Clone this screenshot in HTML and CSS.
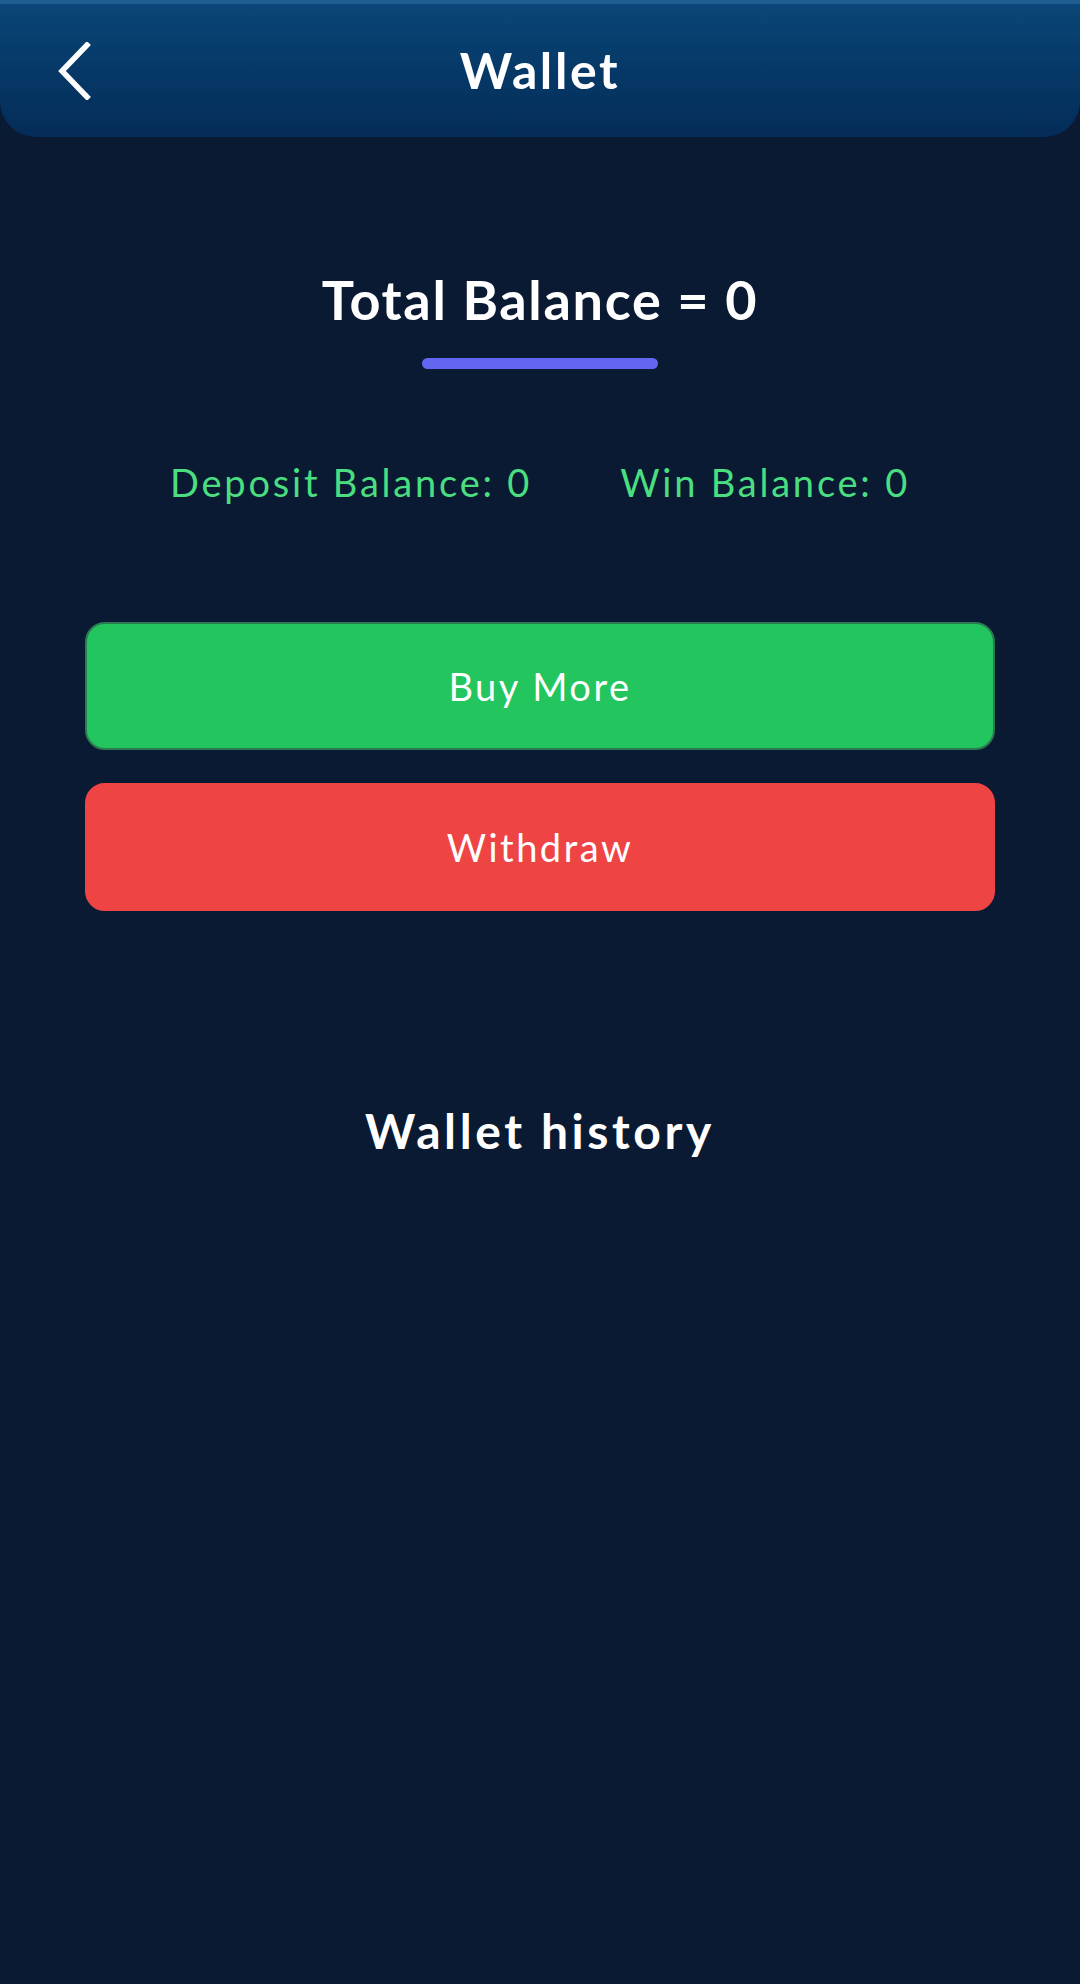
FILE: index.html
```html
<!DOCTYPE html>
<html lang="en">
<head>
<meta charset="utf-8">
<title>Wallet</title>
<link rel="stylesheet" href="styles.css">
</head>
<body>
<header class="topbar">
  <div class="topbar-left">
    <svg class="back" width="34" height="58" viewBox="0 0 34 58" aria-hidden="true">
      <path d="M30 3 L5 29 L30 55" fill="none" stroke="#ffffff" stroke-width="5.5" stroke-linecap="square" stroke-linejoin="miter"/>
    </svg>
  </div>
  <h1 class="topbar-title">Wallet</h1>
  <div class="topbar-right"></div>
</header>
<main class="content">
  <section class="total">
    <h2 class="total-title">Total Balance = 0</h2>
    <div class="total-bar"></div>
  </section>
  <div class="balances">
    <span class="balance">Deposit Balance: 0</span>
    <span class="balance">Win Balance: 0</span>
  </div>
  <div class="actions">
    <button class="btn btn-green">Buy More</button>
    <button class="btn btn-red">Withdraw</button>
  </div>
  <h2 class="history-title">Wallet history</h2>
</main>
</body>
</html>
```
FILE: styles.css
```css
* { box-sizing: border-box; }
html, body {
  margin: 0;
  padding: 0;
}
body {
  width: 1080px;
  min-height: 1984px;
  background: #0a1a33;
  font-family: "Lato", "Noto Sans", sans-serif;
  color: #ffffff;
}
.topbar {
  height: 137px;
  display: grid;
  grid-template-columns: 1fr auto 1fr;
  align-items: center;
  background: linear-gradient(180deg, #0a4677 0%, #063a69 45%, #042c58 100%);
  border-top: 4px solid #1d5d8f;
  border-radius: 0 0 36px 36px;
}
.topbar-left {
  display: flex;
  align-items: center;
  padding-left: 57px;
}
.back { display: block; }
.topbar-title {
  margin: 0 0 2px;
  font-size: 50px;
  font-weight: 700;
  line-height: 1;
  letter-spacing: 2.6px;
}
.content {
  display: flex;
  flex-direction: column;
  align-items: center;
}
.total {
  display: flex;
  flex-direction: column;
  align-items: center;
  margin-top: 133px;
}
.total-title {
  margin: 0;
  font-size: 54px;
  font-weight: 700;
  line-height: 60px;
  letter-spacing: 1.7px;
}
.total-bar {
  width: 236px;
  height: 11px;
  border-radius: 6px;
  background: #6366f1;
  margin-top: 28px;
}
.balances {
  display: flex;
  justify-content: center;
  gap: 88px;
  margin-top: 90px;
}
.balance {
  color: #4ade80;
  font-size: 38px;
  font-weight: 400;
  line-height: 46px;
  letter-spacing: 2.8px;
}
.actions {
  width: 910px;
  display: flex;
  flex-direction: column;
  gap: 33px;
  margin-top: 117px;
}
.btn {
  height: 128px;
  border-radius: 20px;
  font-family: inherit;
  font-size: 38px;
  letter-spacing: 2.5px;
  color: #ffffff;
  border: 2px solid transparent;
  padding: 0;
}
.btn-green {
  background: #22c55e;
  border-color: #2b7a52;
}
.btn-red {
  background: #ef4444;
  border-color: #ef4444;
}
.history-title {
  margin: 192px 0 0;
  font-size: 48px;
  font-weight: 700;
  line-height: 56px;
  letter-spacing: 3.6px;
}
```
